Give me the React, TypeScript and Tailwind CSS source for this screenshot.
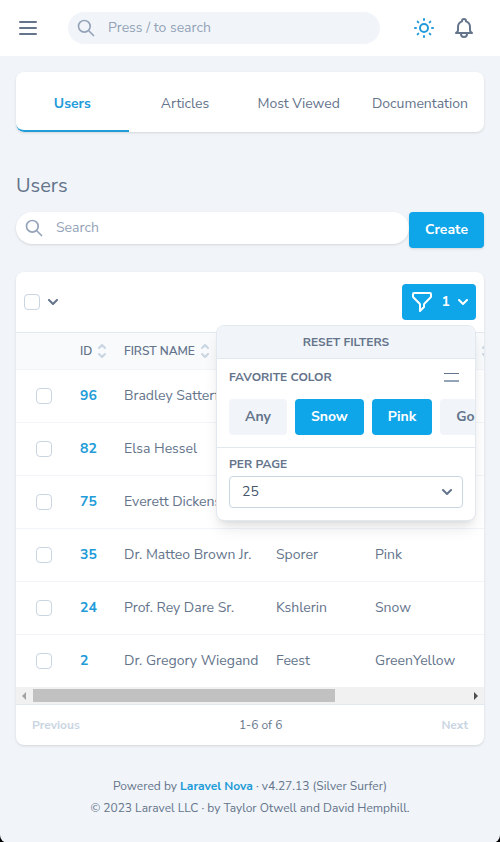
import type { ReactNode } from "react";

type User = { id: number; first: string; last: string; color: string };

const users: User[] = [
  { id: 96, first: "Bradley Satterfield", last: "Kuhn", color: "Snow" },
  { id: 82, first: "Elsa Hessel", last: "Mraz", color: "Pink" },
  { id: 75, first: "Everett Dickens", last: "Rohan", color: "Snow" },
  { id: 35, first: "Dr. Matteo Brown Jr.", last: "Sporer", color: "Pink" },
  { id: 24, first: "Prof. Rey Dare Sr.", last: "Kshlerin", color: "Snow" },
  { id: 2, first: "Dr. Gregory Wiegand", last: "Feest", color: "GreenYellow" },
];

function Icon({ d, className = "size-6" }: { d: string; className?: string }) {
  return (
    <svg
      className={`shrink-0 ${className}`}
      viewBox="0 0 24 24"
      fill="none"
      stroke="currentColor"
      strokeWidth="2"
      strokeLinecap="round"
      strokeLinejoin="round"
      aria-hidden="true"
    >
      <path d={d} />
    </svg>
  );
}

const paths = {
  menu: "M4 6h16M4 12h16M4 18h16",
  search: "M21 21l-6-6m2-5a7 7 0 11-14 0 7 7 0 0114 0z",
  sun: "M12 3v1m0 16v1m9-9h-1M4 12H3m15.364 6.364l-.707-.707M6.343 6.343l-.707-.707m12.728 0l-.707.707m-11.314 11.314l-.707.707M16 12a4 4 0 11-8 0 4 4 0 018 0z",
  bell: "M15 17h5l-1.405-1.405A2.032 2.032 0 0118 14.158V11a6.002 6.002 0 00-4-5.659V5a2 2 0 10-4 0v.341C7.67 6.165 6 8.388 6 11v3.159c0 .538-.214 1.055-.595 1.436L4 17h5m6 0v1a3 3 0 11-6 0v-1m6 0H9",
  funnel:
    "M3 4a1 1 0 011-1h16a1 1 0 011 1v2.586a1 1 0 01-.293.707l-6.414 6.414a1 1 0 00-.293.707V17l-4 4v-6.586a1 1 0 00-.293-.707L3.293 7.293A1 1 0 013 6.586V4z",
};

function Chevron({ className = "" }: { className?: string }) {
  return (
    <svg className={`h-[6px] w-[10px] shrink-0 ${className}`} viewBox="0 0 10 6" aria-hidden="true">
      <path
        fill="currentColor"
        d="M8.292893.292893c.390525-.390524 1.023689-.390524 1.414214 0 .390524.390525.390524 1.023689 0 1.414214l-4 4c-.390525.390524-1.023689.390524-1.414214 0l-4-4c-.390524-.390525-.390524-1.023689 0-1.414214.390525-.390524 1.023689-.390524 1.414214 0L5 3.585786 8.292893.292893z"
      />
    </svg>
  );
}

function SortIcon() {
  return (
    <svg
      className="h-[14px] w-2 shrink-0 text-slate-300"
      viewBox="0 0 8 14"
      fill="none"
      stroke="currentColor"
      strokeWidth="2"
      strokeLinecap="round"
      strokeLinejoin="round"
      aria-hidden="true"
    >
      <path d="M1 4l3-3 3 3M1 10l3 3 3-3" />
    </svg>
  );
}

function Checkbox({ label }: { label: string }) {
  return (
    <input
      type="checkbox"
      aria-label={label}
      className="block size-4 shrink-0 appearance-none rounded border border-slate-300 bg-white checked:bg-[#0ea5e9]"
    />
  );
}

function SortHeader({ children }: { children: ReactNode }) {
  return (
    <th scope="col" className="px-2 py-0 text-left font-semibold">
      <button className="flex items-center gap-[6px] whitespace-nowrap uppercase">
        {children}
        <SortIcon />
      </button>
    </th>
  );
}

function FilterOption({ label, active = false }: { label: string; active?: boolean }) {
  return (
    <button
      aria-pressed={active}
      className={`h-9 shrink-0 rounded px-4 font-bold ${active ? "bg-[#0ea5e9] text-white" : "bg-[#f1f5f9] text-[#64748b]"}`}
    >
      {label}
    </button>
  );
}

function FilterMenu() {
  return (
    <div className="absolute top-[53px] right-2 z-10 w-[260px] overflow-hidden rounded-lg border border-slate-200 bg-white shadow-lg">
      <button className="block h-8 w-full bg-[#f1f5f9] text-[12px] font-bold">RESET FILTERS</button>
      <div className="border-t border-slate-200 pt-2 pb-3 pl-3">
        <div className="flex h-5 items-center justify-between pr-4">
          <h3 className="text-[12px] font-bold">FAVORITE COLOR</h3>
          <svg className="h-[10px] w-4" viewBox="0 0 16 10" aria-hidden="true">
            <path d="M1 1.5h15" stroke="#64748b" strokeWidth="1" />
            <path d="M1 9h15" stroke="#94a3b8" strokeWidth="2" />
          </svg>
        </div>
        <div className="mt-3 flex gap-2 overflow-hidden">
          <FilterOption label="Any" />
          <FilterOption label="Snow" active />
          <FilterOption label="Pink" active />
          <FilterOption label="Gold" />
        </div>
      </div>
      <div className="border-t border-slate-200 px-3 pt-2 pb-3">
        <label htmlFor="per-page" className="block h-5 text-[12px] leading-4 font-bold">
          PER PAGE
        </label>
        <div className="relative">
          <select
            id="per-page"
            defaultValue="25"
            className="block h-8 w-full appearance-none rounded border border-slate-300 bg-white px-3 text-slate-600"
          >
            <option>25</option>
            <option>50</option>
            <option>100</option>
          </select>
          <Chevron className="pointer-events-none absolute top-[13px] right-[11px]" />
        </div>
      </div>
    </div>
  );
}

const tabs = ["Users", "Articles", "Most Viewed", "Documentation"];

export default function App() {
  return (
    <div className="bg-black">
      <div className="min-h-screen overflow-hidden rounded-b-lg bg-[#f1f5f9] pb-6 font-['Nunito_Sans',Nunito,Lato,sans-serif] text-[14px] leading-5 text-[#64748b]">
        <header className="flex h-14 items-center bg-white px-4">
          <button aria-label="Open menu">
            <Icon d={paths.menu} />
          </button>
          <label className="mr-8 ml-7 flex h-8 flex-1 items-center gap-3 rounded-full bg-[#f1f5f9] px-2 text-[#94a3b8]">
            <Icon d={paths.search} className="size-5" />
            <input
              type="search"
              aria-label="Global search"
              placeholder="Press / to search"
              className="w-full min-w-0 bg-transparent leading-5 outline-none placeholder:text-[#94a3b8]"
            />
          </label>
          <div className="flex gap-4 pr-2">
            <button aria-label="Toggle theme" className="text-[#229bd8]">
              <Icon d={paths.sun} />
            </button>
            <button aria-label="Notifications">
              <Icon d={paths.bell} />
            </button>
          </div>
        </header>

        <main className="px-4 pt-4">
          <nav className="flex h-[60px] overflow-hidden rounded-lg bg-white shadow">
            {tabs.map((tab, i) => (
              <a
                key={tab}
                href="#"
                className={`flex flex-1 items-center justify-center border-b-2 px-4 pt-[6px] whitespace-nowrap ${
                  i === 0 ? "rounded-bl-lg border-[#229bd8] font-bold text-[#229bd8]" : "border-transparent"
                }`}
              >
                {tab}
              </a>
            ))}
          </nav>

          <h1 className="mt-10 text-[20px] leading-7">Users</h1>

          <div className="mt-3 flex items-start">
            <label className="flex h-8 flex-1 items-center gap-3 rounded-full bg-white px-2 text-[#94a3b8] shadow">
              <Icon d={paths.search} className="size-5" />
              <input
                type="search"
                aria-label="Search users"
                placeholder="Search"
                className="w-full min-w-0 bg-transparent leading-5 outline-none placeholder:text-[#94a3b8]"
              />
            </label>
            <button className="h-9 rounded bg-[#0ea5e9] px-4 font-bold text-white shadow">Create</button>
          </div>

          <section className="relative mt-6 rounded-lg bg-white shadow">
            <div className="flex h-[60px] items-center justify-between px-2">
              <div className="flex items-center gap-2">
                <Checkbox label="Select all users" />
                <button aria-label="Selection options">
                  <Chevron />
                </button>
              </div>
              <button
                className="flex h-9 items-center gap-2 rounded bg-[#0ea5e9] px-2 font-bold text-white"
                aria-label="Filters"
              >
                <Icon d={paths.funnel} />
                <span>1</span>
                <Chevron />
              </button>
            </div>
            <FilterMenu />

            <div className="overflow-hidden border-t border-slate-200">
              <table className="w-[484px] min-w-full table-fixed">
                <colgroup>
                  <col className="w-14" />
                  <col className="w-11" />
                  <col className="w-[152px]" />
                  <col className="w-[99px]" />
                  <col />
                </colgroup>
                <thead className="bg-[#f8fafc] text-[12px]">
                  <tr className="h-9">
                    <th aria-label="Selected" />
                    <SortHeader>ID</SortHeader>
                    <SortHeader>First Name</SortHeader>
                    <SortHeader>Last Name</SortHeader>
                    <SortHeader>Favorite Color</SortHeader>
                  </tr>
                </thead>
                <tbody>
                  {users.map((user) => (
                    <tr key={user.id} className="h-[53px] border-t border-slate-100">
                      <td className="pl-5">
                        <Checkbox label={`Select ${user.first}`} />
                      </td>
                      <td className="px-2">
                        <a href="#" className="font-bold text-[#229bd8]">
                          {user.id}
                        </a>
                      </td>
                      <td className="px-2 whitespace-nowrap">{user.first}</td>
                      <td className="px-2">{user.last}</td>
                      <td className="px-2">{user.color}</td>
                    </tr>
                  ))}
                </tbody>
              </table>
            </div>

            <div className="flex h-[17px] items-center justify-between bg-[#f1f1f1] px-[6px]" aria-hidden="true">
              <svg className="h-2 w-1" viewBox="0 0 4 8">
                <path d="M4 0v8L0 4z" fill="#a3a3a3" />
              </svg>
              <div className="mx-[7px] flex-1">
                <div className="h-[13px] w-[69.6%] bg-[#c1c1c1]" />
              </div>
              <svg className="h-2 w-1" viewBox="0 0 4 8">
                <path d="M0 0v8l4-4z" fill="#505050" />
              </svg>
            </div>

            <div className="flex h-[41px] items-center justify-between border-t border-slate-200 px-4 text-[12px]">
              <button disabled className="font-bold text-slate-300">
                Previous
              </button>
              <span>1-6 of 6</span>
              <button disabled className="font-bold text-slate-300">
                Next
              </button>
            </div>
          </section>

          <footer className="mt-[30px] text-center text-[12px] leading-[22px]">
            <p>
              Powered by{" "}
              <a href="#" className="font-bold text-[#229bd8]">
                Laravel Nova
              </a>{" "}
              · v4.27.13 (Silver Surfer)
            </p>
            <p>© 2023 Laravel LLC · by Taylor Otwell and David Hemphill.</p>
          </footer>
        </main>
      </div>
    </div>
  );
}
